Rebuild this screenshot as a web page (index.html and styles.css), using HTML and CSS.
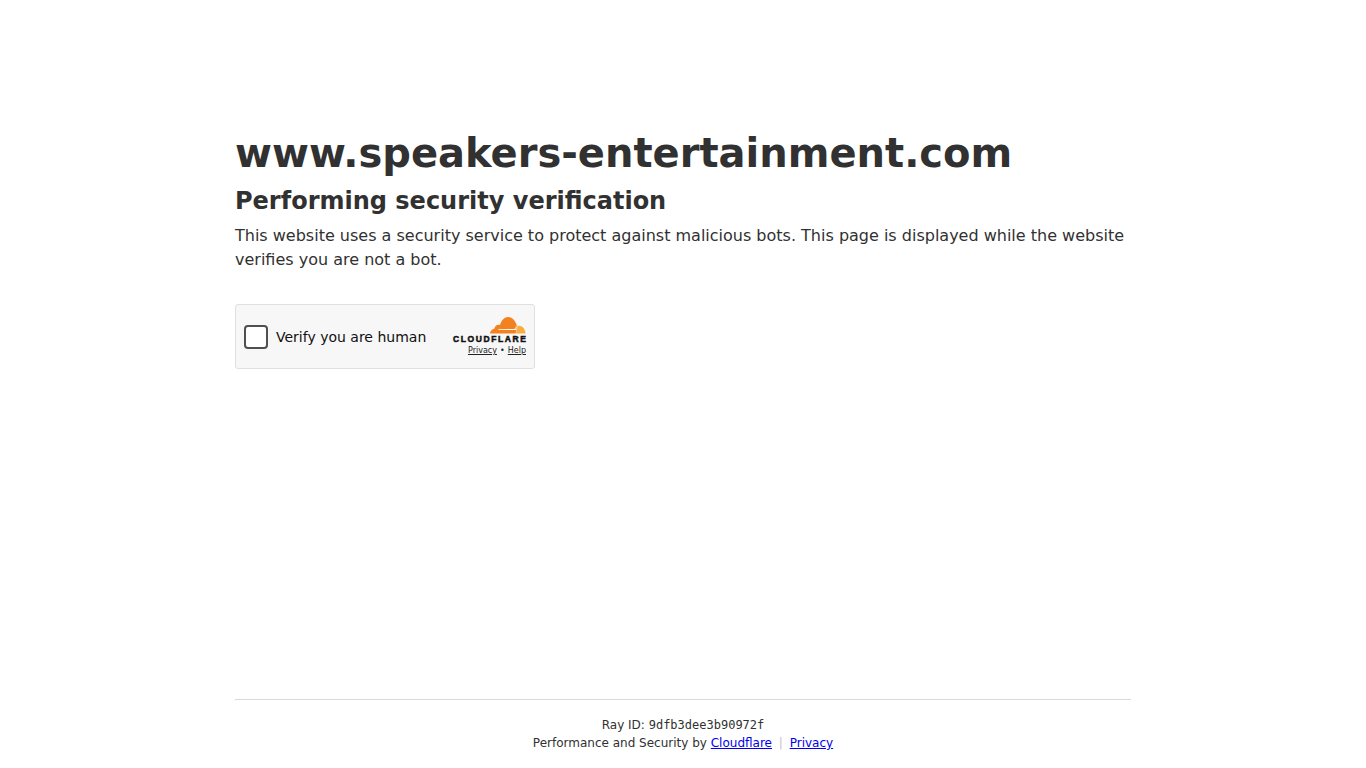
FILE: index.html
```html
<!DOCTYPE html>
<html lang="en">
<head>
<title>Just a moment...</title>
<link rel="stylesheet" href="styles.css">
</head>
<body>
<div class="page">
  <main class="content">
    <h1 class="site">www.speakers-entertainment.com</h1>
    <h2 class="heading">Performing security verification</h2>
    <p class="note">This website uses a security service to protect against malicious bots. This page is displayed while the website verifies you are not a bot.</p>

    <div class="widget">
      <label class="check">
        <span class="box"></span>
        <span class="check-label">Verify you are human</span>
      </label>
      <div class="brand">
        <svg class="cloud" width="36" height="17" viewBox="0 0 36 17">
          <path fill="#f48120" d="M0 16.500C.2 14.200 1.800 12.200 4.300 11.800 4.800 9 7.300 7.200 10 8 11.500 3.200 14.500 0 18 0c3.800 0 7 3 8.500 7.500.8 2.400.2 6-1 9z"/>
          <path fill="#faad3f" d="M25.800 16.500c1-2.400 1.500-5 1.700-7.500 4.300-1.100 7.700 2.500 8.100 7.500z"/>
          <path fill="#fff" d="M8 12.300l16-.3 2.600-.9-.5 1.900H8.500z"/>
          <path fill="#fff" d="M25.500 9.500h1l.2 1.200-1 .4z"/>
        </svg>
        <span class="wordmark">CLOUDFLARE</span>
        <span class="brand-links"><a href="#">Privacy</a> <span class="dot">•</span> <a href="#">Help</a></span>
      </div>
    </div>
  </main>

  <footer class="foot">
    <div class="ray">Ray ID: <code>9dfb3dee3b90972f</code></div>
    <div>Performance and Security by <a href="#">Cloudflare</a> <span class="sep">|</span> <a href="#">Privacy</a></div>
  </footer>
</div>
</body>
</html>
```

FILE: styles.css
```css
* {
  box-sizing: border-box;
}

html, body {
  margin: 0;
  padding: 0;
}

body {
  background-color: #fff;
  color: #313131;
  font-family: "DejaVu Sans", sans-serif;
}

.page {
  display: flex;
  flex-direction: column;
  width: 896px;
  height: 768px;
  margin: 0 auto;
}

.content {
  flex: 1;
  padding-top: 128px;
}

.site {
  margin: 0;
  font-size: 40px;
  line-height: 50px;
  font-weight: 700;
}

.heading {
  margin: 0;
  padding-top: 8px;
  font-size: 24px;
  line-height: 30px;
  font-weight: 700;
}

.note {
  margin: 8px 0 0;
  font-size: 16px;
  line-height: 24px;
}

.widget {
  display: flex;
  align-items: center;
  justify-content: space-between;
  width: 300px;
  height: 65px;
  margin-top: 32px;
  padding: 0 8px;
  background-color: #f7f7f7;
  border: 1px solid #e0e0e0;
  border-radius: 3px;
}

.check {
  display: flex;
  align-items: center;
  gap: 8px;
}

.box {
  width: 24px;
  height: 24px;
  background-color: #fff;
  border: 2px solid #4f4f4f;
  border-radius: 4px;
}

.check-label {
  font-size: 14px;
  color: #111;
}

.brand {
  display: flex;
  flex-direction: column;
  align-items: flex-end;
  padding-top: 1px;
}

.cloud {
  display: block;
}

.wordmark {
  font-family: "Liberation Sans", sans-serif;
  font-size: 8.500px;
  line-height: 10px;
  font-weight: 700;
  letter-spacing: 1.6px;
  margin-right: -1.5px;
  color: #111;
  -webkit-text-stroke: .5px #111;
}

.brand-links {
  margin-top: 1px;
  font-size: 8px;
  line-height: 12px;
  color: #232323;
  white-space: nowrap;
}

.brand-links a {
  color: #232323;
}

.dot {
  margin: 0 .5px;
}

.foot {
  height: 69px;
  padding-top: 16px;
  border-top: 1px solid #d9d9d9;
  text-align: center;
  font-size: 12px;
  line-height: 18px;
}

.ray code {
  font-family: "DejaVu Sans Mono", monospace;
  font-size: 12px;
}

.foot a {
  color: #0000ee;
}

.sep {
  margin: 0 3px;
  color: #c4c4c4;
}
```
